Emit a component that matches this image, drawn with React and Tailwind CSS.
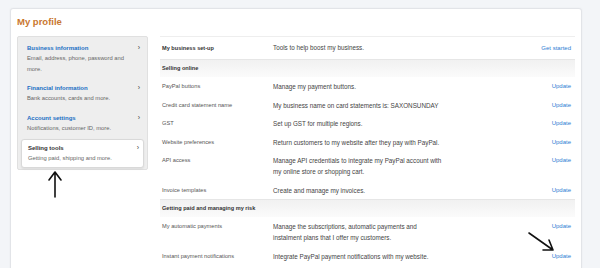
import React from "react";

const F = { fontFamily: '"Liberation Sans", Arial, sans-serif' };

function SideItem({ title, desc, active }) {
  return (
    <div className={active ? "mx-[3px] mt-[5px] rounded-[3px] border border-[#d9d9d9] bg-white px-[6px] pt-[3px] pb-[4px] shadow-[0_1px_2px_rgba(0,0,0,0.08)]" : "px-[9px]"}>
      <div className="flex items-center justify-between">
        <span className={"text-[6px] leading-[10px] font-bold " + (active ? "text-[#333]" : "text-[#1a6fc4]")}>{title}</span>
        <span className="text-[7px] leading-[10px] text-[#444] mr-[-2px]">›</span>
      </div>
      <div className="text-[5.8px] leading-[10.5px] text-[#666] pr-[4px]">{desc}</div>
    </div>
  );
}

function Row({ label, children, link = "Update" }) {
  return (
    <div className="flex items-start pt-[4px] pb-[3.5px]">
      <div className="w-[113px] pl-[2px] text-[5.7px] leading-[11px] text-[#555]">{label}</div>
      <div className="flex-1 text-[6.3px] leading-[11px] text-[#444]">{children}</div>
      <div className="pr-[4px] text-[6px] leading-[11px] text-[#2b7ed3]">{link}</div>
    </div>
  );
}

function Header({ children }) {
  return (
    <div className="h-[18px] flex items-center pl-[2px] border-t border-[#e6e6e6] bg-gradient-to-b from-[#f1f1f1] to-[#fbfbfb] text-[5.6px] font-bold text-[#333]">
      {children}
    </div>
  );
}

export default function App() {
  return (
    <div style={F} className="relative w-[600px] h-[268px] overflow-hidden bg-[#f3f5f8] pt-[8px] pl-[10px]">
      <div className="w-[572px] h-[300px] rounded-[3px] border border-[#e2e4e8] bg-white px-[6px] pt-[7px] shadow-[0_0_2px_rgba(0,0,0,0.05)]">
        <div className="text-[9.5px] leading-[12px] text-[#c9772f] font-semibold">My profile</div>
        <div className="mt-[8px] flex">
          <div className="w-[131px] h-[134px] rounded-[2px] border border-[#e0e0e0] bg-[#eeeeee] pt-[6px]">
            <SideItem title="Business information" desc="Email, address, phone, password and more." />
            <div className="h-[9px]" />
            <SideItem title="Financial information" desc="Bank accounts, cards and more." />
            <div className="h-[9.5px]" />
            <SideItem title="Account settings" desc="Notifications, customer ID, more." />
            <SideItem title="Selling tools" desc="Getting paid, shipping and more." active />
          </div>
          <div className="ml-[12px] w-[415px] border-t border-[#eeeeee]">
            <div className="h-[22px] flex items-center">
              <div className="w-[113px] pl-[2px] text-[5.6px] font-bold text-[#333]">My business set-up</div>
              <div className="flex-1 text-[6.3px] text-[#444]">Tools to help boost my business.</div>
              <div className="pr-[4px] text-[6px] text-[#2b7ed3]">Get started</div>
            </div>
            <Header>Selling online</Header>
            <Row label="PayPal buttons">Manage my payment buttons.</Row>
            <Row label="Credit card statement name">My business name on card statements is: SAXONSUNDAY</Row>
            <Row label="GST">Set up GST for multiple regions.</Row>
            <Row label="Website preferences">Return customers to my website after they pay with PayPal.</Row>
            <Row label="API access">Manage API credentials to integrate my PayPal account with<br />my online store or shopping cart.</Row>
            <Row label="Invoice templates">Create and manage my invoices.</Row>
            <Header>Getting paid and managing my risk</Header>
            <Row label="My automatic payments">Manage the subscriptions, automatic payments and<br />instalment plans that I offer my customers.</Row>
            <Row label="Instant payment notifications">Integrate PayPal payment notifications with my website.</Row>
          </div>
        </div>
      </div>
      <svg className="absolute left-[46px] top-[170px]" width="18" height="30" viewBox="0 0 18 30">
        <path d="M9 2 V27 M3 10 L9 2 L15 10" fill="none" stroke="#111" strokeWidth="1.6" strokeLinecap="round" strokeLinejoin="round" />
      </svg>
      <svg className="absolute left-[526px] top-[229px]" width="30" height="25" viewBox="0 0 30 25">
        <path d="M3 4 L27 21 M17 21 L27 21 L23 11" fill="none" stroke="#111" strokeWidth="1.6" strokeLinecap="round" strokeLinejoin="round" />
      </svg>
    </div>
  );
}
